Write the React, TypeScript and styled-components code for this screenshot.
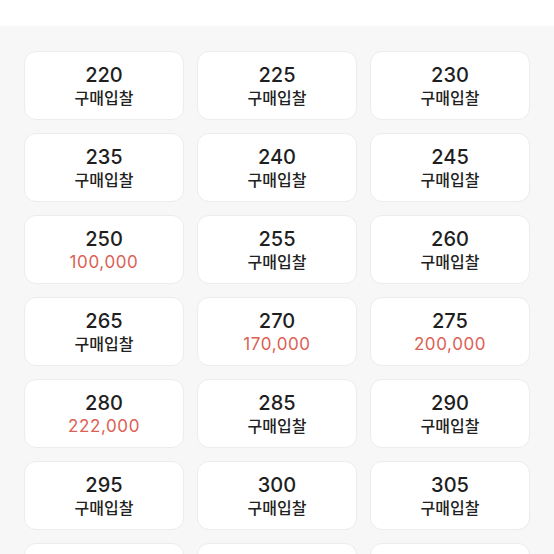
import React from 'react'
import styled, { createGlobalStyle } from 'styled-components'

const GlobalStyle = createGlobalStyle`
  html, body {
    margin: 0;
    padding: 0;
    background: #f7f7f7;
  }
  body {
    font-family: 'Inter', 'Noto Sans CJK KR', sans-serif;
    color: #222;
  }
`

type Size = { size: number; price?: string }

const sizes: Size[] = [
  { size: 220 }, { size: 225 }, { size: 230 },
  { size: 235 }, { size: 240 }, { size: 245 },
  { size: 250, price: '100,000' }, { size: 255 }, { size: 260 },
  { size: 265 }, { size: 270, price: '170,000' }, { size: 275, price: '200,000' },
  { size: 280, price: '222,000' }, { size: 285 }, { size: 290 },
  { size: 295 }, { size: 300 }, { size: 305 },
]

const App = () => {
  return (
    <>
      <GlobalStyle />
      <Page>
        <TopBar />
        <Grid>
          {sizes.map((s) => (
            <Card key={s.size}>
              <SizeLabel>{s.size}</SizeLabel>
              <Sub $price={!!s.price}>{s.price ?? '구매입찰'}</Sub>
            </Card>
          ))}
          {/* next row, only its top edge is in view */}
          <Card />
          <Card />
          <Card />
        </Grid>
      </Page>
    </>
  )
}

const Page = styled.div`
  width: 554px;
  height: 554px;
  overflow: hidden;
  background: #f7f7f7;
`

const TopBar = styled.div`
  height: 26px;
  background: #fff;
`

const Grid = styled.div`
  display: grid;
  grid-template-columns: repeat(3, 160px);
  column-gap: 13px;
  row-gap: 13px;
  padding: 25px 24px 0;
`

const Card = styled.div`
  box-sizing: border-box;
  height: 69px;
  background: #fff;
  border: 1px solid #ececec;
  border-radius: 12px;
  display: flex;
  flex-direction: column;
  align-items: center;
  padding-top: 11px;
`

const SizeLabel = styled.div`
  font-size: 20px;
  font-weight: 500;
  line-height: 24px;
  color: #1f1f1f;
`

const Sub = styled.div<{ $price: boolean }>`
  font-size: ${(p) => (p.$price ? '17px' : '16px')};
  font-weight: ${(p) => (p.$price ? 400 : 500)};
  line-height: 22px;
  letter-spacing: ${(p) => (p.$price ? '0.6px' : '0')};
  color: ${(p) => (p.$price ? '#dc5f55' : '#222')};
`

export default App
